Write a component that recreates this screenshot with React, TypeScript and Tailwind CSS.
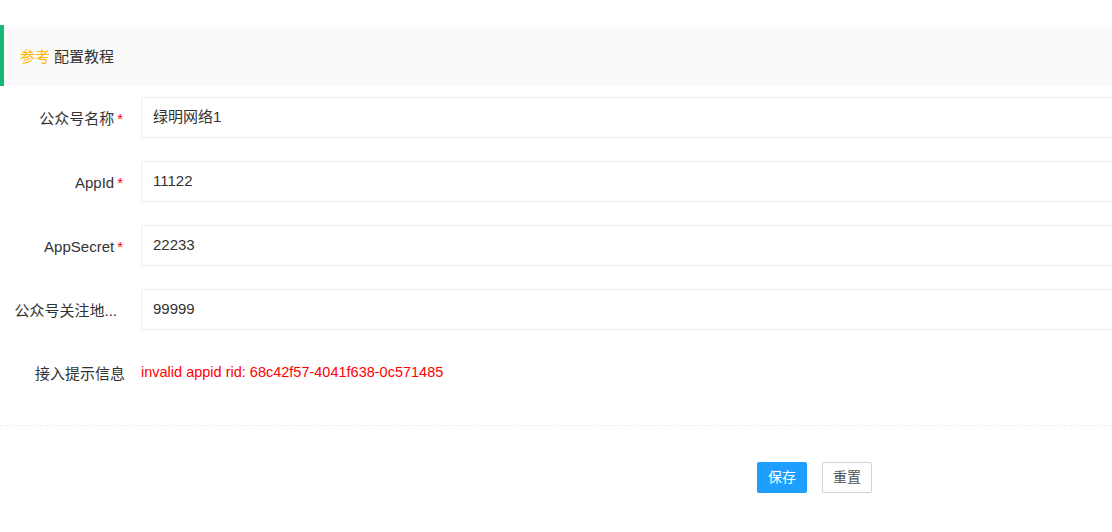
import React from "react";

const FIELDS = [
  { label: "公众号名称", value: "绿明网络1", required: true },
  { label: "AppId", value: "11122", required: true },
  { label: "AppSecret", value: "22233", required: true },
  { label: "公众号关注地...", value: "99999", required: false },
];

export default function App() {
  return (
    <div
      className="h-[532px] w-[1112px] overflow-hidden bg-white text-[14px] text-[#333]"
      style={{ fontFamily: '"Liberation Sans", "Noto Sans CJK SC", sans-serif' }}
    >
      <div className="pt-[25px]">
        <div className="flex h-[61px] items-center border-l-4 border-[#16b777] bg-[#fafafa] pl-4 pt-[3px] text-[15px]">
          <span className="text-[#ffb800]">参考</span>
          <span className="ml-1 text-[#333]">配置教程</span>
        </div>

        <div className="mt-[11px] w-[1130px]">
          {FIELDS.map((f) => (
            <div key={f.label} className="mb-[23px] flex items-center">
              <label
                title={f.required ? undefined : "公众号关注地址"}
                className={`flex w-[141px] shrink-0 items-center justify-end pl-[15px] pt-[4px] text-[15px] ${
                  f.required ? "pr-[18px]" : "pr-[24px]"
                }`}
              >
                <span className="whitespace-nowrap">{f.label}</span>
                {f.required && <span className="ml-[3px] text-[#f00]">*</span>}
              </label>
              <div className="flex h-[41px] flex-1 items-center rounded-[2px] border border-[#eee] pl-[11px] text-[15px] text-[#333]">
                {f.value}
              </div>
            </div>
          ))}

          <div className="mt-[31px] flex items-center">
            <label className="w-[141px] shrink-0 px-[16px] pt-[2px] text-right text-[15px]">接入提示信息</label>
            <span className="text-[14.5px] text-[#f00]">invalid appid rid: 68c42f57-4041f638-0c571485</span>
          </div>
        </div>

        <div className="mt-[39px] border-t border-dashed border-[#eee]" />

        <div className="mt-[36px] flex gap-[15px] pl-[757px]">
          <button
            type="button"
            className="h-[31px] w-[50px] rounded-[2px] bg-[#1e9fff] text-[14px] text-white"
          >
            保存
          </button>
          <button
            type="button"
            className="h-[31px] w-[50px] rounded-[2px] border border-[#d2d2d2] bg-white text-[14px] text-[#555]"
          >
            重置
          </button>
        </div>
      </div>
    </div>
  );
}
